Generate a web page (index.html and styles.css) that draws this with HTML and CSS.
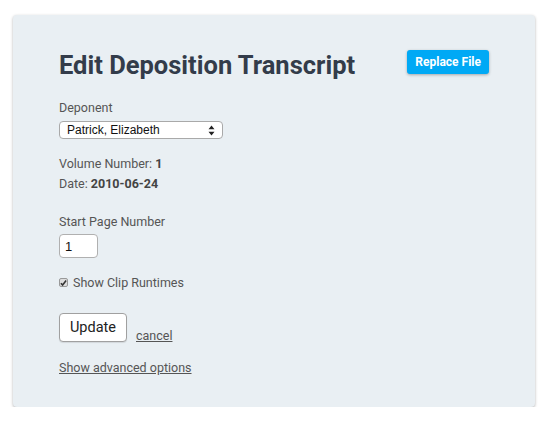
FILE: index.html
```html
<!DOCTYPE html>
<html>
<head>
<meta charset="utf-8">
<link rel="stylesheet" href="styles.css">
</head>
<body>
<div class="card">
  <div class="header">
    <h1 class="title">Edit Deposition Transcript</h1>
    <button class="btn-primary">Replace File</button>
  </div>
  <div class="field">
    <label class="label">Deponent</label>
    <div class="select">
      <span>Patrick, Elizabeth</span>
      <svg class="arrows" width="7" height="11" viewBox="0 0 7 11"><path d="M3.5 0.5 L6.5 4.2 H0.5 Z M3.5 10.5 L6.5 6.8 H0.5 Z" fill="#222"/></svg>
    </div>
  </div>
  <div class="meta">
    <div>Volume Number: <b>1</b></div>
    <div>Date: <b>2010-06-24</b></div>
  </div>
  <div class="field">
    <label class="label">Start Page Number</label>
    <div class="input">1</div>
  </div>
  <div class="check">
    <span class="box"><svg width="8" height="8" viewBox="0 0 8 8"><path d="M1 4.2 L3 6.3 L7 1.2" stroke="#333" stroke-width="1.8" fill="none"/></svg></span>
    <span>Show Clip Runtimes</span>
  </div>
  <div class="actions">
    <button class="btn-update">Update</button>
    <a class="link">cancel</a>
  </div>
  <a class="link advanced">Show advanced options</a>
</div>
</body>
</html>
```
FILE: styles.css
```css
* { box-sizing: border-box; }
body {
  margin: 0;
  padding: 15px 15px 0 13px;
  background: #fff;
  font-family: Roboto, "Liberation Sans", sans-serif;
  color: #555;
}
.card {
  width: 522px;
  height: 392px;
  background: #e9eff3;
  border-radius: 4px;
  box-shadow: 0 1px 3px rgba(0,0,0,0.3);
  padding: 34px 46px 0 46px;
}
.header {
  display: flex;
  justify-content: space-between;
  align-items: flex-start;
}
.title {
  margin: 1px 0 0 0;
  font-size: 25.5px;
  font-weight: 700;
  color: #333c4a;
  line-height: 30px;
}
.btn-primary {
  margin-top: 1px;
  height: 24px;
  padding: 0 8px;
  border: 0;
  border-radius: 3px;
  background: #00a9f5;
  color: #fff;
  font-family: Roboto, sans-serif;
  font-weight: 700;
  font-size: 12px;
  box-shadow: 0 1px 3px rgba(0,0,0,0.3);
}
.field { display: flex; flex-direction: column; align-items: flex-start; }
.label {
  font-size: 12.5px;
  line-height: 16px;
  margin-top: 20px;
  color: #555;
}
.select {
  margin-top: 5px;
  width: 164px;
  height: 18px;
  border: 1px solid #a9a9a9;
  border-radius: 4px;
  background: #fff;
  display: flex;
  align-items: center;
  justify-content: space-between;
  padding: 0 7px 0 7px;
  font-family: "Liberation Sans", sans-serif;
  font-size: 12px;
  color: #111;
}
.arrows { display: block; }
.meta {
  margin-top: 15px;
  font-size: 12.5px;
  line-height: 20px;
  color: #555;
}
.meta b { color: #444; }
.meta + .field .label { margin-top: 20px; }
.input {
  margin-top: 4px;
  width: 39px;
  height: 24px;
  border: 1px solid #b0b0b0;
  border-radius: 4px;
  background: #fff;
  font-family: "Liberation Sans", sans-serif;
  font-size: 13px;
  color: #111;
  padding: 4px 0 0 5px;
}
.check {
  margin-top: 17px;
  display: flex;
  align-items: center;
  gap: 5px;
  font-size: 12.5px;
  color: #555;
}
.box {
  width: 9px;
  height: 9px;
  border: 1px solid #999;
  border-radius: 2px;
  background: #ddd;
  display: flex;
  align-items: center;
  justify-content: center;
}
.box svg { display: block; }
.actions {
  margin-top: 23px;
  display: flex;
  align-items: flex-end;
  gap: 9px;
}
.btn-update {
  height: 29px;
  width: 68px;
  padding: 0;
  border: 1px solid #a0a0a0;
  border-radius: 4px;
  background: #fff;
  font-family: Roboto, sans-serif;
  font-size: 14.5px;
  color: #222;
  box-shadow: 0 1px 1px rgba(0,0,0,0.1);
}
.link {
  font-size: 12.5px;
  color: #555;
  text-decoration: underline;
  line-height: 16px;
  margin-bottom: -2px;
}
.advanced {
  display: inline-block;
  margin-top: 18px;
}
```
